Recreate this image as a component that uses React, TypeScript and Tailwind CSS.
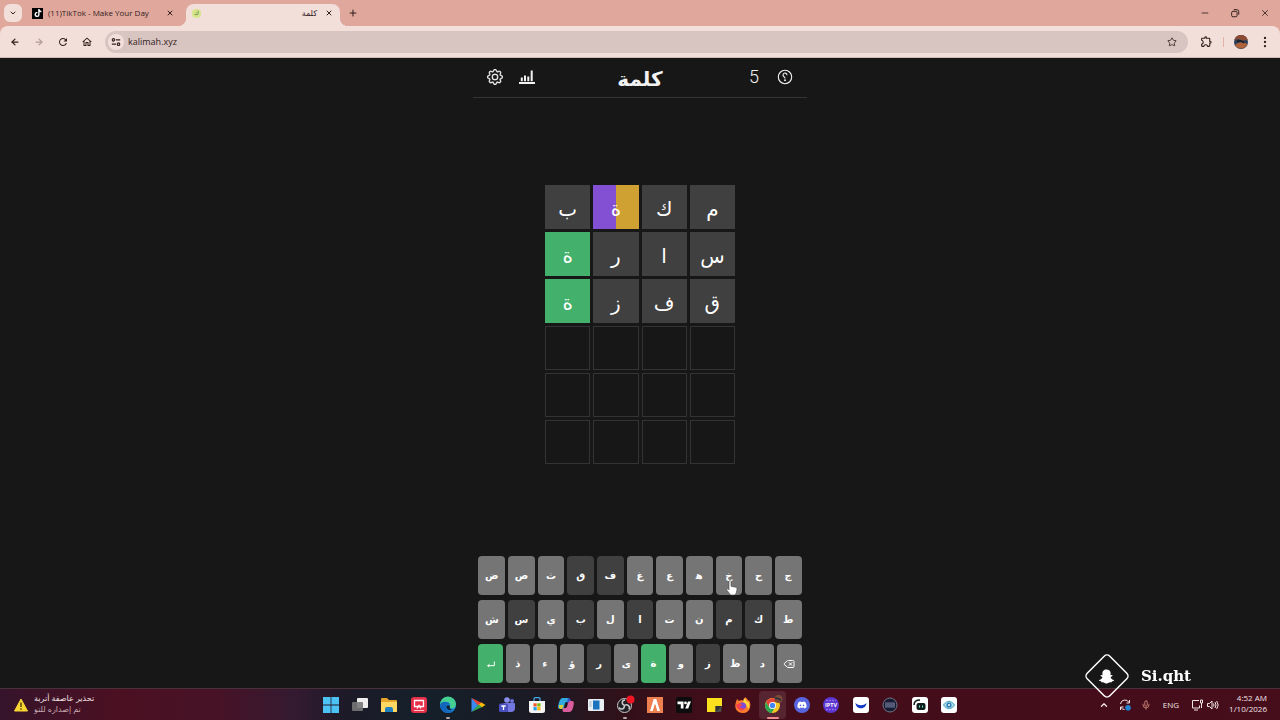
import type { ReactNode } from 'react';
import clsx from 'clsx';
import { ArrowLeft, ArrowRight, ChevronDown, ChevronUp, Delete, EllipsisVertical, Mic, Minus, Plus, Star, X } from 'lucide-react';
import { BsGear } from 'react-icons/bs';
import { FaDiscord, FaSnapchatGhost, FaTiktok } from 'react-icons/fa';
import { MdOutlineExtension, MdOutlineHome, MdRefresh } from 'react-icons/md';

type Status = 'absent' | 'correct' | 'split' | 'unused';

const UI = "font-['Open_Sans','DejaVu_Sans',sans-serif]";
const ARABIC = "font-['DejaVu_Sans',sans-serif]";

const guesses: [string, Status][][] = [
  [['م', 'absent'], ['ك', 'absent'], ['ة', 'split'], ['ب', 'absent']],
  [['س', 'absent'], ['ا', 'absent'], ['ر', 'absent'], ['ة', 'correct']],
  [['ق', 'absent'], ['ف', 'absent'], ['ز', 'absent'], ['ة', 'correct']],
];

const emptyRows = 3;
const wordLength = 4;

const keyRows = [
  ['ج', 'ح', 'خ', 'ه\u200d', 'ع', 'غ', 'ف', 'ق', 'ث', 'ص', 'ض'],
  ['ط', 'ك', 'م', 'ن', 'ت', 'ا', 'ل', 'ب', 'ي', 'س', 'ش'],
  ['delete', 'د', 'ظ', 'ز', 'و', 'ة', 'ى', 'ر', 'ؤ', 'ء', 'ذ', 'enter'],
];

const absentKeys = ['ف', 'ق', 'ك', 'م', 'ا', 'ب', 'س', 'ز', 'ر'];
const correctKeys = ['ة', 'enter'];

function TabStrip() {
  return (
    <div className="flex h-[26px] items-end bg-[#e0a89c] pl-1 text-[#33201d]">
      <button aria-label="Search tabs" className="mb-1 flex size-[18px] items-center justify-center rounded-md bg-[#f3dfda]">
        <ChevronDown className="size-2" strokeWidth={3} />
      </button>
      <div className="flex h-[22px] w-[164px] items-center pr-3 pb-1 pl-2.5 text-[9px]">
        <span className="flex size-[11px] items-center justify-center bg-black text-white">
          <FaTiktok className="size-2" />
        </span>
        <span className="ml-[5px] flex-1 whitespace-nowrap text-[8px]">(11)TikTok - Make Your Day</span>
        <button aria-label="Close tab"><X className="size-2" strokeWidth={3} /></button>
      </div>
      <div className="relative flex h-[22px] w-[154px] items-center rounded-t-lg bg-[#f3dfda] pr-[7px] pb-1 pl-1.5 before:absolute before:bottom-0 before:-left-2 before:size-2 before:bg-[radial-gradient(circle_at_0_0,transparent_8px,#f3dfda_8px)] after:absolute after:-right-2 after:bottom-0 after:size-2 after:bg-[radial-gradient(circle_at_100%_0,transparent_8px,#f3dfda_8px)]">
        <span className="flex size-[9px] items-center justify-center rounded-sm bg-[#d7e58f] text-[6px] text-[#3d6b2c]">ك</span>
        <span className="mr-2 flex-1 text-right text-[8px]">كلمة</span>
        <button aria-label="Close tab"><X className="size-2" strokeWidth={3} /></button>
      </div>
      <button aria-label="New tab" className="mb-2 ml-2"><Plus className="size-2.5" strokeWidth={2.5} /></button>
      <div className="mb-2 ml-auto flex gap-5 pr-2.5">
        <button aria-label="Minimize"><Minus className="size-2.5" /></button>
        <button aria-label="Restore">
          <svg viewBox="0 0 12 12" className="size-2.5" fill="none" stroke="currentColor" strokeWidth="1.2">
            <rect x="2" y="4" width="6.5" height="6.5" rx="1.5" />
            <path d="M4.5 2h3.7a2.3 2.3 0 0 1 2.3 2.3V8" />
          </svg>
        </button>
        <button aria-label="Close"><X className="size-2.5" /></button>
      </div>
    </div>
  );
}

function Toolbar() {
  return (
    <div className="bg-[#e0a89c]">
      <div className="flex h-8 items-center rounded-t-lg border-b border-[#cfbcb8] bg-[#f3dfda] pr-2 pl-[3px] text-[#33201d]">
        <button aria-label="Back" className="flex w-6 justify-center"><ArrowLeft className="size-2.5" strokeWidth={3} /></button>
        <button aria-label="Forward" className="flex w-6 justify-center text-[#b39c98]"><ArrowRight className="size-2.5" strokeWidth={3} /></button>
        <button aria-label="Reload" className="flex w-6 justify-center"><MdRefresh className="size-3" /></button>
        <button aria-label="Home" className="flex w-6 justify-center"><MdOutlineHome className="size-3" /></button>
        <div className="mr-3 ml-1.5 flex h-[22px] flex-1 items-center rounded-full bg-[#d8c5c2] pr-[11px] pl-[3px]">
          <button aria-label="Site information" className="flex size-4 items-center justify-center rounded-full bg-[#f3dfda]">
            <svg viewBox="0 0 12 12" className="size-2.5" fill="none" stroke="currentColor" strokeWidth="1.4">
              <circle cx="3" cy="3.4" r="1.5" />
              <circle cx="9" cy="8.6" r="1.5" />
              <path d="M6 3.4h5M1 8.6h5" />
            </svg>
          </button>
          <input aria-label="Address" defaultValue="kalimah.xyz" className="ml-1 min-w-0 flex-1 bg-transparent text-[9px] outline-none" />
          <button aria-label="Bookmark"><Star className="size-2.5" /></button>
        </div>
        <button aria-label="Extensions"><MdOutlineExtension className="size-[13px]" /></button>
        <span className="mx-2.5 h-2.5 w-px bg-[#e3b3aa]" />
        <button aria-label="Profile">
          <svg viewBox="0 0 14 14" className="size-3.5">
            <circle cx="7" cy="7" r="7" fill="#2e4058" />
            <path d="M.3 5A7 7 0 0 1 13.700 5L9 5.500 4 4z" fill="#8b4a32" />
            <path d="M1 10Q6 5 13.500 9A7 7 0 0 1 1 10z" fill="#b0633a" />
            <path d="M3 6.500q4-2 7 1.500" fill="none" stroke="#1c1b20" strokeWidth="1.500" />
          </svg>
        </button>
        <button aria-label="Menu" className="ml-2.5"><EllipsisVertical className="size-3.5" strokeWidth={2} /></button>
      </div>
    </div>
  );
}

function GameHeader() {
  return (
    <header className="grid h-10 w-full grid-cols-[1fr_auto_1fr] items-center border-b border-[#333] px-3.5 pb-0.5 text-[#f2f2f2]">
      <div className="flex gap-4">
        <button aria-label="Settings"><BsGear className="size-4" strokeWidth={0.3} /></button>
        <button aria-label="Statistics">
          <svg viewBox="0 0 16 16" className="size-4" fill="currentColor">
            <path d="M0 13h16v2H0zM1.800 8.500h2v3.700h-2zM5 6.500h2v5.700H5zM8.300 7.500h2v4.700h-2zM11.700 1.500h2v10.700h-2z" />
          </svg>
        </button>
      </div>
      <h1 className="pt-1 text-xl leading-8 font-bold">كلمة</h1>
      <div className="flex items-center justify-end gap-[18px]">
        <span className="font-['Roboto',sans-serif] text-lg leading-5 font-light">5</span>
        <button aria-label="Help">
          <svg viewBox="0 0 16 16" className="size-4" fill="none" stroke="currentColor" strokeWidth="1.1">
            <circle cx="8" cy="8" r="6.700" />
            <path d="M10 6.200a2 2 0 1 0-3 1.600c.7.400 1 .8 1 1.700" />
            <circle cx="8" cy="11.300" r=".4" fill="currentColor" />
          </svg>
        </button>
      </div>
    </header>
  );
}

function Board() {
  return (
    <div dir="rtl" className="grid w-[190px] grid-cols-4 gap-[3px]">
      {guesses.flat().map(([letter, status], i) => (
        <div
          key={i}
          className={clsx(
            'flex h-11 items-center justify-center pt-[3px] text-xl leading-6 text-white',
            status === 'absent' && 'bg-[#404040]',
            status === 'correct' && 'bg-[#43b16b]',
            status === 'split' && 'bg-[linear-gradient(to_right,#8350d3_50%,#cfa032_50%)]',
          )}
        >
          {letter}
        </div>
      ))}
      {Array.from({ length: emptyRows * wordLength }, (_, i) => (
        <div key={i} className="h-11 border border-[#333]" />
      ))}
    </div>
  );
}

function Pointer() {
  return (
    <svg viewBox="0 0 12 16" className="absolute top-6 left-2.5 h-4 w-3" fill="#fff" stroke="#444" strokeWidth=".6">
      <path d="M3 1.500c0-1.300 2-1.300 2 0v4.700l4.500 1c1.200.3 1.700 1 1.500 2.200l-.7 3.300-1.300 2.300H4.500L1 10.200c-.7-1.200.5-2 1.300-1.200l.7.800z" />
    </svg>
  );
}

function keyLabel(k: string): ReactNode {
  if (k === 'delete') return <Delete className="size-3" strokeWidth={2} />;
  if (k === 'enter') {
    return (
      <svg viewBox="0 0 12 12" className="size-2.5" fill="none" stroke="currentColor" strokeWidth="1.2">
        <path d="M10 3v5H2M4 6.500L2 8l2 1.500" />
      </svg>
    );
  }
  return k;
}

function Keyboard() {
  return (
    <div dir="rtl" className="flex w-[323px] flex-col gap-[5px]">
      {keyRows.map((row, i) => (
        <div key={i} className="flex gap-[3px]">
          {row.map((k) => (
            <button
              key={k}
              aria-label={k}
              className={clsx(
                'relative flex h-[39px] min-w-0 flex-1 items-center justify-center rounded pt-px text-[10px] leading-4 font-bold text-white',
                correctKeys.includes(k) ? 'bg-[#43b16b]' : absentKeys.includes(k) ? 'bg-[#404040]' : 'bg-[#757575]',
              )}
            >
              {keyLabel(k)}
              {k === 'خ' && <Pointer />}
            </button>
          ))}
        </div>
      ))}
    </div>
  );
}

const apps: { name: string; art: ReactNode; running?: boolean; active?: boolean }[] = [
  {
    name: 'Start',
    art: <path d="M0 0h7.600v7.600H0zM8.400 0H16v7.600H8.400zM0 8.400h7.600V16H0zM8.400 8.400H16V16H8.400z" fill="#4cc2f5" />,
  },
  {
    name: 'Task view',
    art: <><rect x="5" y="1" width="11" height="10" rx="1" fill="#eee" /><rect x="0" y="5" width="11" height="9" rx="1" fill="#777" fillOpacity=".9" /></>,
  },
  {
    name: 'File Explorer',
    art: <><path d="M0 2q0-1 1-1h5l2 2h7q1 0 1 1v11H0z" fill="#e5a52c" /><path d="M0 5h16v9q0 1-1 1H1q-1 0-1-1z" fill="#ffd863" /><path d="M4 15v-3q0-2 2-2h4q2 0 2 2v3z" fill="#1f7fc0" /></>,
  },
  {
    name: 'AnyViewer',
    art: <><rect width="16" height="16" rx="3" fill="#e5304a" /><path d="M3.500 3.500h9v6h-9zM6 11.500l2-3 2 3" fill="none" stroke="#fff" strokeWidth="1.300" /><path d="M3 13.500h10" stroke="#ffc0c8" strokeWidth="1" /></>,
  },
  {
    name: 'Edge',
    running: true,
    art: <><circle cx="8" cy="8" r="8" fill="#1989d6" /><path d="M0 8a8 8 0 0 1 16-1c0 3-2 4.500-4.500 4.500-1.500 0-2.500-.7-1.500-2C11 7 9 5 6.500 5 3.500 5 1 6 0 8z" fill="#45cf90" /><path d="M0 8c1-4 8-4.500 10 0-2-2-5 0-4 3 .8 2.500 4 4 7.500 2.800A8 8 0 0 1 0 8z" fill="#1267bd" /><path d="M6.300 10c0 3 3.500 4 7.500 2.500-2 .5-4.500-.5-3.900-2.800.5-1.700-3.600-2.200-3.600.3z" fill="#10243c" /></>,
  },
  {
    name: 'Google Play',
    art: <><path d="M1.500 1l7 7-7 7z" fill="#3b8bf0" /><path d="M1.500 1L12 6 8.500 9z" fill="#ea4335" /><path d="M11.500 5.500L15.500 8l-4 2.500L8.500 8z" fill="#fbbc04" /><path d="M1.500 15L12 10 8.500 7.500z" fill="#34a853" /></>,
  },
  {
    name: 'Teams',
    art: <><circle cx="8" cy="3" r="2.800" fill="#8a8ff0" /><circle cx="13" cy="4" r="2" fill="#6b70dd" /><path d="M4 6h11q1 0 1 1v4a4 4 0 0 1-4 4H9z" fill="#7378e0" /><rect y="6.500" width="9" height="8.500" rx="1.500" fill="#4b50c0" /><path d="M2.300 9h4.400M4.500 9v4" stroke="#fff" strokeWidth="1.300" /></>,
  },
  {
    name: 'Microsoft Store',
    art: <><path d="M5 4V2q0-1.300 1.300-1.300h3.400Q11 .7 11 2v2" fill="none" stroke="#4aa9ec" strokeWidth="1.200" /><path d="M0 4h16v9.500Q16 16 13.500 16h-11Q0 16 0 13.500z" fill="#f5f5f5" /><path d="M4.500 6.300h3.200v3.200H4.500z" fill="#f0582a" /><path d="M8.300 6.300h3.200v3.200H8.300z" fill="#7fba00" /><path d="M4.500 10.100h3.200v3.200H4.500z" fill="#20a0ee" /><path d="M8.300 10.100h3.200v3.200H8.300z" fill="#ffb900" /></>,
  },
  {
    name: 'Copilot',
    art: <><path d="M4.500 1H10c2 0 1.500 3 1 4H8.500c-1 0-1.500 1-2 3s-1 4-2.500 4H2c-2.500 0-2-3-1.300-5.500C1.500 3.500 2.500 1 4.500 1z" fill="#2fa9de" /><path d="M11.500 15H6c-2 0-1.500-3-1-4h2.500c1 0 1.500-1 2-3s1-4 2.500-4h2c2.500 0 2 3 1.300 5.500-.8 3-1.800 5.500-3.800 5.500z" fill="#dc5d9b" /><path d="M1 8h4.500c-.4 2-1 4-2 4-2.500 0-3-1.500-2.500-4z" fill="#d6cc3c" /><path d="M10 1c2 0 2.500 1.500 3 3-2 0-3 .5-3.500 2.500L9 5z" fill="#3556cf" /></>,
  },
  {
    name: 'Run',
    art: <><rect y="2" width="16" height="12" rx="1" fill="#e9eef3" /><rect x="5" y="3.500" width="6.500" height="9" fill="#1b72bd" /><path d="M1.500 5h2M1.500 7h2M1.500 9h2" stroke="#7f95a8" strokeWidth=".8" /></>,
  },
  {
    name: 'OBS Studio',
    running: true,
    art: <><circle cx="7.500" cy="8.500" r="7" fill="#202024" stroke="#c9c9c9" strokeWidth="1" /><path d="M7.500 8.500C4 7 5 3 8 3M7.500 8.500c3-2 6 1 4.500 4M7.500 8.500c0 4-4 4.500-5.500 2" fill="none" stroke="#c9c9c9" strokeWidth="1.500" /><circle cx="13.500" cy="2.500" r="4" fill="#f01522" /></>,
  },
  {
    name: 'FiveM',
    art: <><rect width="16" height="16" fill="#ee7f4f" /><path d="M6.700 2h2.600L13 14h-2.800L8.200 7.500 5.800 14H3z" fill="#fff" /><path d="M8 6.500l2 7.500H6z" fill="#ee7f4f" /></>,
  },
  {
    name: 'TradingView',
    art: <><rect width="16" height="16" rx="2" fill="#0c0c0e" /><path d="M1.500 4.500h6v7H4.800V7.200H1.500zM12 4.500h3L12.200 11.500h-3z" fill="#fff" /><circle cx="9.500" cy="5.900" r="1.400" fill="#fff" /></>,
  },
  {
    name: 'Sticky Notes',
    art: <><path d="M1 1h15v8l-6 6H1z" fill="#fbe11d" /><path d="M9.500 15V9H16l-1 6z" fill="#4d4c4a" /><path d="M9.500 15V9H16z" fill="#2f3035" /></>,
  },
  {
    name: 'Firefox',
    art: <><path d="M1 5l1-3 2 2 2-1c2 0 2 1 3 1l1-4c2 1 3 3 3 4l1-1c3 5 1 13-6 13S-1 10 1 5z" fill="#ff7a2c" /><path d="M9 1c2 1 3 3 3 4l1-1c2 3 2 6 0 8-1-4-3-6-5-7z" fill="#ffd43c" /><circle cx="7.500" cy="9" r="3.500" fill="#7d4bdb" /><path d="M1 8c2-2 5-2 6 0 1 1-2 1-2 2s3 2 5 1c-1 4-8 3-9-3z" fill="#f5414f" /></>,
  },
  {
    name: 'Chrome',
    active: true,
    art: <><circle cx="7.500" cy="8.500" r="7.500" fill="#f3c525" /><path d="M1 5A7.500 7.500 0 0 1 14 5H7.500L4 10z" fill="#e5423a" /><path d="M1 5a7.500 7.500 0 0 0 5.500 11l3.500-5.500L4 10z" fill="#2ea653" /><circle cx="7.500" cy="8.500" r="3.500" fill="#fff" /><circle cx="7.500" cy="8.500" r="2.700" fill="#4285f4" /><circle cx="13.500" cy="2" r="4" fill="#7b4938" /><path d="M10 1q4 0 6 2.500" fill="none" stroke="#252f40" strokeWidth="1.500" /></>,
  },
  {
    name: 'Discord',
    art: <><circle cx="8" cy="8" r="8" fill="#5865e0" /><FaDiscord x="3" y="3" size={10} color="#fff" /></>,
  },
  {
    name: 'IPTV Player',
    art: <><circle cx="8" cy="8" r="8" fill="#5b34cf" /><path d="M3 3.500h10M3 12.500h10" stroke="#8e6cf0" strokeWidth="1.300" strokeDasharray="2 1" /><text x="8" y="10" textAnchor="middle" fontSize="5.500" fontWeight="bold" fill="#fff">IPTV</text></>,
  },
  {
    name: 'Crescent',
    art: <><rect width="16" height="16" rx="3" fill="#fff" /><path d="M2.500 6c3 3 8 3 11 0-.5 7-10.500 7-11 0z" fill="#1438c8" /></>,
  },
  {
    name: 'Recorder',
    art: <><circle cx="8" cy="8" r="7" fill="#171c30" stroke="#7a7d92" strokeWidth=".9" /><rect x="3" y="5.500" width="10" height="5" fill="#6a7190" /><path d="M3 7h10M3 9h10" stroke="#232942" strokeWidth=".6" /></>,
  },
  {
    name: 'Streamlabs',
    art: <><rect width="16" height="16" rx="3" fill="#fff" /><rect x="4.500" y="6" width="9" height="7" rx="2" fill="#111c1c" /><path d="M2 8q0-5 6-5" fill="none" stroke="#111c1c" strokeWidth="1.500" /><path d="M7.500 8.500v2M10.500 8.500v2" stroke="#6fe5c5" strokeWidth="1.100" /></>,
  },
  {
    name: 'Eye',
    art: <><rect width="16" height="16" rx="3" fill="#fff" /><path d="M1.500 8Q8-1 14.500 8 8 17 1.500 8z" fill="#b5e2ea" /><path d="M2.500 8Q8 1 13.500 8 8 15 2.500 8z" fill="none" stroke="#3992b5" strokeWidth=".8" /><circle cx="8" cy="8" r="2.600" fill="#2d81b8" /><circle cx="8" cy="8" r="1" fill="#fff" /></>,
  },
];

function Taskbar() {
  return (
    <footer className="grid h-8 grid-cols-[1fr_auto_1fr] items-center border-t border-[#49313b] bg-[linear-gradient(to_right,#35142b_0%,#4b1022_9%,#471226_17%,#341a31_23%,#1d1a28_27%,#14202a_33%,#1c1a24_42%,#321019_49%,#430d1a_57%,#460d1b_100%)] text-[#f1e4e6]">
      <button className="flex items-center gap-1.5 justify-self-start pl-3.5">
        <svg viewBox="0 0 14 14" className="size-3.5">
          <path d="M7 1l6.500 12H.5z" fill="#f7d633" stroke="#f7d633" strokeLinejoin="round" />
          <path d="M7 4.500v4.500M7 10.300v1.400" stroke="#4b3a0c" strokeWidth="1.400" />
        </svg>
        <span dir="rtl" className="pb-1 text-[8px] leading-[11px]">
          <span className="block text-left">تحذير عاصفة أتربة</span>
          <span className="block text-left text-[#c7a9b1]">تم إصداره للتو</span>
        </span>
      </button>
      <nav className="flex w-[646px] justify-between">
        {apps.map((app) => (
          <button
            key={app.name}
            aria-label={app.name}
            className={clsx('relative flex h-7 w-[27px] items-center justify-center rounded-sm', app.active && 'bg-white/10')}
          >
            <svg viewBox="0 0 16 16" className="size-4 overflow-visible">{app.art}</svg>
            {(app.running || app.active) && (
              <span className={clsx('absolute bottom-0 h-0.5 rounded-full', app.active ? 'w-3 bg-[#ee8b90]' : 'w-1 bg-[#b3a5aa]')} />
            )}
          </button>
        ))}
      </nav>
      <div className="flex items-center justify-end pr-[13px] text-[8px]">
        <button aria-label="Hidden icons" className="mr-2.5"><ChevronUp className="size-2.5" strokeWidth={3} /></button>
        <button aria-label="Sync" className="mr-2.5">
          <svg viewBox="0 0 12 12" className="size-3" fill="none" stroke="currentColor">
            <path d="M1.500 5A4.500 4.500 0 0 1 10 3.500M10.500 1v3h-3M1.500 11V8h3M2 8.500q1.500 2 3.500 2" />
            <circle cx="9" cy="8.800" r="2.800" fill="#1f86d8" stroke="none" />
          </svg>
        </button>
        <button aria-label="Microphone" className="mr-3 text-[#d58d7e]"><Mic className="size-2.5" /></button>
        <button className="mr-3">ENG</button>
        <button aria-label="Network" className="mr-1">
          <svg viewBox="0 0 12 12" className="size-3" fill="none" stroke="currentColor">
            <path d="M8 1.500H1.500v7.500h7V6.500M3 11h4M9.500 1h2v3h-2zM10.500 4v5" />
          </svg>
        </button>
        <button aria-label="Volume" className="mr-2.5">
          <svg viewBox="0 0 12 12" className="size-3" fill="none" stroke="currentColor">
            <path d="M.5 4.500v3h2L5 10V2L2.500 4.500zM6.500 4.500q1 1.500 0 3M8 3q2 3 0 6M9.700 2q3 4 0 8" />
          </svg>
        </button>
        <button className="pb-1 text-right leading-[11px]">
          <span className="block">4:52 AM</span>
          <span className="block">1/10/2026</span>
        </button>
      </div>
    </footer>
  );
}

function Watermark() {
  return (
    <div className="pointer-events-none fixed right-[89px] bottom-[21px] flex items-center gap-[11px] text-white">
      <span className="relative flex size-[46px] items-center justify-center">
        <svg viewBox="0 0 46 46" className="absolute size-[46px]" fill="none" stroke="#fff" strokeWidth="1.500">
          <rect x="7" y="7" width="32" height="32" rx="4" transform="rotate(45 23 23)" />
        </svg>
        <FaSnapchatGhost className="size-[15px]" />
      </span>
      <span className="font-['DejaVu_Serif',serif] text-[15px] leading-5 font-bold">Si.qht</span>
    </div>
  );
}

export default function App() {
  return (
    <div className={`flex min-h-screen flex-col bg-[#171717] ${UI}`}>
      <TabStrip />
      <Toolbar />
      <main className={`mx-auto flex w-full max-w-[334px] flex-1 flex-col items-center pb-[5px] ${ARABIC}`}>
        <GameHeader />
        <div className="flex flex-1 items-center pb-[5px]">
          <Board />
        </div>
        <Keyboard />
      </main>
      <Taskbar />
      <Watermark />
    </div>
  );
}
